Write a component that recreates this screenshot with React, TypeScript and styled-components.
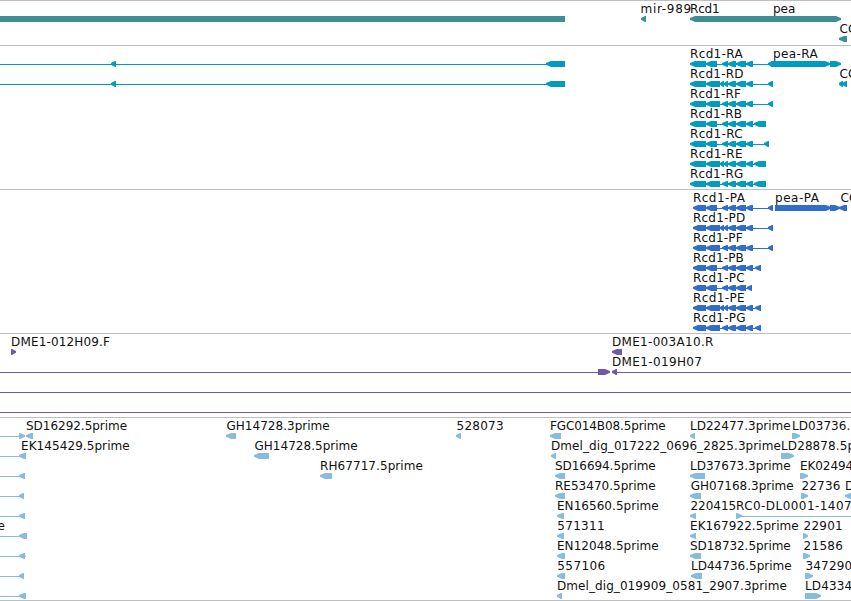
import React from "react";
import styled, { createGlobalStyle } from "styled-components";

const FONT = '12px "DejaVu Sans"';

const GlobalStyle = createGlobalStyle`
  body {
    margin: 0;
    background: #fff;
    overflow: hidden;
  }
`;

const Browser = styled.main`
  display: flex;
  flex-direction: column;
  width: 851px;
  height: 601px;
  box-sizing: border-box;
  overflow: hidden;
  border-bottom: 1px solid #bebebe;
`;

const TrackPanel = styled.section<{ $height: number; $color: string }>`
  display: flex;
  flex-direction: column;
  flex: none;
  box-sizing: border-box;
  height: ${(p) => p.$height}px;
  border-top: 1px solid #bebebe;
  color: ${(p) => p.$color};
`;

const Lane = styled.div`
  position: relative;
  flex: none;
  height: 20px;
`;

const Glyphs = styled.svg`
  display: block;
  width: 851px;
  height: 22px;
  overflow: visible;
  fill: currentColor;
`;

const Name = styled.span`
  position: absolute;
  top: 1px;
  height: 15px;
  font: 12px/15px "DejaVu Sans", sans-serif;
  color: #111;
  white-space: pre;
`;

// Label: text, first inked pixel, last inked pixel.
type Label = [string, number, number];
// Feature: "<" left arrow, ">" right arrow, "=" plain bar, "-" connector.
type Feature = ["<" | ">" | "=" | "-", number, number];
type LaneData = { labels?: Label[]; features: Feature[] };
type Track = { color: string; height: number; lanes: LaneData[] };

const ctx = document.createElement("canvas").getContext("2d")!;

function fitLabel([text, from, to]: Label) {
  ctx.font = FONT;
  const m = ctx.measureText(text);
  const ink = m.actualBoundingBoxRight + m.actualBoundingBoxLeft;
  const gaps = Math.max(1, text.length - 1);
  return {
    left: from + m.actualBoundingBoxLeft,
    letterSpacing: text.length > 1 ? (to - from - ink) / gaps : 0,
  };
}

function Shape({ feature: [kind, a, b] }: { feature: Feature }) {
  if (kind === "-") return <rect x={a} y={18} width={b - a} height={1} />;
  if (kind === "=") return <rect x={a} y={15} width={b - a} height={6} />;
  const head = Math.min(5, b - a - 1);
  const points =
    kind === "<"
      ? `${a},17 ${a + head},15 ${b},15 ${b},21 ${a + head},21 ${a},18.7`
      : `${b},17 ${b - head},15 ${a},15 ${a},21 ${b - head},21 ${b},18.7`;
  return <polygon points={points} />;
}

function TrackView({ track }: { track: Track }) {
  return (
    <TrackPanel $height={track.height} $color={track.color}>
      {track.lanes.map((lane, i) => (
        <Lane key={i}>
          <Glyphs>
            {lane.features.map((f, j) => (
              <Shape key={j} feature={f} />
            ))}
          </Glyphs>
          {lane.labels?.map((l) => (
            <Name key={l[0]} style={fitLabel(l)}>
              {l[0]}
            </Name>
          ))}
        </Lane>
      ))}
    </TrackPanel>
  );
}

// Exons shared by the Rcd1 isoforms.
const rcd1 = (start: number, second: "short" | "long" | "split", tail: Feature[]): Feature[] => [
  ["-", start + 2, tail[tail.length - 1][1] + 3],
  ["<", start, 706],
  ["<", 706, second === "short" ? 717 : 720],
  ...(second === "split"
    ? ([["<", 720, 724], ["<", 724, 728]] as Feature[])
    : ([["<", 722, 728]] as Feature[])),
  ["<", 728, 736],
  ["<", 736, 746],
  ...tail,
];

const mid: Feature = ["<", 746, 753];
const far: Feature = ["<", 768, 773];
const utr: Feature = ["<", 754, 766];
const cds: Feature = ["<", 755, 761];

const tracks: Track[] = [
  {
    color: "#3d8f94",
    height: 45,
    lanes: [
      {
        labels: [["mir-989", 641.5, 690.5], ["Rcd1", 691, 719], ["pea", 774, 795]],
        features: [["=", 0, 565], ["<", 641, 646], ["<", 690, 770], [">", 768, 841]],
      },
      { labels: [["CG", 839.5, 857]], features: [["<", 839, 847]] },
    ],
  },
  {
    color: "#009cbf",
    height: 144,
    lanes: [
      {
        labels: [["Rcd1-RA", 691, 743.5], ["pea-RA", 774, 818.5]],
        features: [
          ["-", 0, 550], ["<", 111, 116], ["<", 546, 565],
          ...rcd1(690, "short", [mid, far]),
          ["=", 771, 775], [">", 772, 830], [">", 830, 841],
        ],
      },
      {
        labels: [["Rcd1-RD", 691, 743.3], ["CG", 839.5, 857]],
        features: [
          ["-", 0, 550], ["<", 111, 116], ["<", 546, 565],
          ...rcd1(690, "split", [mid, far]),
          ["<", 839, 843], ["<", 842, 847],
        ],
      },
      { labels: [["Rcd1-RF", 691, 741]], features: rcd1(690, "long", [mid, far]) },
      { labels: [["Rcd1-RB", 691, 741.7]], features: rcd1(690, "short", [mid, utr]) },
      { labels: [["Rcd1-RC", 691, 742.3]], features: rcd1(690, "short", [mid, ["<", 764, 769]]) },
      { labels: [["Rcd1-RE", 691, 742]], features: rcd1(690, "split", [mid, utr]) },
      { labels: [["Rcd1-RG", 691, 743]], features: rcd1(690, "long", [mid, utr]) },
    ],
  },
  {
    color: "#306dcc",
    height: 144,
    lanes: [
      {
        labels: [["Rcd1-PA", 694, 745.7], ["pea-PA", 776, 819.7], ["CG", 840.5, 858]],
        features: [
          ...rcd1(693, "short", [mid, far]),
          [">", 775, 831], [">", 830, 840], ["<", 839, 847],
        ],
      },
      { labels: [["Rcd1-PD", 694, 745]], features: rcd1(693, "split", [mid, far]) },
      { labels: [["Rcd1-PF", 694, 742.7]], features: rcd1(693, "long", [mid, far]) },
      { labels: [["Rcd1-PB", 694, 743.5]], features: rcd1(693, "short", [mid, cds]) },
      { labels: [["Rcd1-PC", 694, 744.3]], features: rcd1(693, "short", [["<", 747, 752]]) },
      { labels: [["Rcd1-PE", 694, 744]], features: rcd1(693, "split", [mid, cds]) },
      { labels: [["Rcd1-PG", 694, 745.3]], features: rcd1(693, "long", [mid, cds]) },
    ],
  },
  {
    color: "#7158a8",
    height: 84,
    lanes: [
      {
        labels: [["DME1-012H09.F", 12, 110], ["DME1-003A10.R", 613, 713]],
        features: [[">", 11, 16], ["<", 612, 622]],
      },
      {
        labels: [["DME1-019H07", 613, 701.3]],
        features: [["-", 0, 600], [">", 598, 610], ["<", 612, 617], ["-", 615, 851]],
      },
      { features: [["-", 0, 851]] },
      { features: [["-", 0, 851]] },
    ],
  },
  {
    color: "#88bcde",
    height: 183,
    lanes: [
      {
        labels: [
          ["SD16292.5prime", 26, 126.7], ["GH14728.3prime", 226.5, 329.3], ["528073", 456.5, 503],
          ["FGC014B08.5prime", 551, 665.3], ["LD22477.3prime", 691, 790.3], ["LD03736.", 793, 849.5],
        ],
        features: [
          ["-", 0, 20], [">", 19, 25], ["<", 26, 33], ["<", 226, 236], ["<", 456, 461],
          ["<", 550, 561], ["<", 690, 695], [">", 792, 800],
        ],
      },
      {
        labels: [
          ["EK145429.5prime", 22, 129.3], ["GH14728.5prime", 254.5, 357.3],
          ["Dmel_dig_017222_0696_2825.3prime", 552, 780.5], ["LD28878.5p", 782, 854.5],
        ],
        features: [["-", 0, 22], ["<", 19, 26], ["<", 254, 269], ["<", 551, 556], [">", 781, 794]],
      },
      {
        labels: [
          ["RH67717.5prime", 321, 422.5], ["SD16694.5prime", 555, 655.3],
          ["LD37673.3prime", 691, 790.3], ["EK02494", 801, 852.5],
        ],
        features: [["-", 0, 22], ["<", 19, 25], ["<", 320, 332], ["<", 555, 565], ["<", 690, 705], [">", 800, 808]],
      },
      {
        labels: [
          ["RE53470.5prime", 556, 655.3], ["GH07168.3prime", 690.7, 793.3],
          ["22736", 801.5, 839.7], ["D", 846, 853],
        ],
        features: [["-", 0, 22], ["<", 19, 24], ["<", 555, 565], ["<", 690, 701], [">", 801, 808], ["<", 845, 852]],
      },
      {
        labels: [
          ["EN16560.5prime", 558, 658.3], ["220415", 690.5, 735.5], ["RC0-DL0001-1407", 737, 851],
        ],
        features: [["-", 0, 22], ["<", 19, 25], ["<", 557, 564], ["<", 690, 696], [">", 736, 742], ["-", 739, 851]],
      },
      {
        labels: [["e", -2.5, 4], ["571311", 557.3, 604], ["EK167922.5prime", 691, 798.3], ["22901", 803.5, 842]],
        features: [["-", 0, 22], ["<", 19, 27], ["<", 557, 564], ["<", 690, 696], [">", 803, 808]],
      },
      {
        labels: [["EN12048.5prime", 558, 658.3], ["SD18732.5prime", 690, 790.3], ["21586", 803.5, 842.3]],
        features: [["-", 0, 26], ["<", 19, 25], ["<", 557, 565], ["<", 690, 701], [">", 803, 810]],
      },
      {
        labels: [["557106", 557.3, 604.5], ["LD44736.5prime", 692, 791.3], ["347290", 805.5, 851.5]],
        features: [["-", 0, 22], ["<", 19, 24], ["<", 557, 565], ["<", 691, 702], [">", 805, 813]],
      },
      {
        labels: [["Dmel_dig_019909_0581_2907.3prime", 558, 786.5], ["LD4334", 806, 851.5]],
        features: [["-", 0, 22], ["<", 19, 26], ["<", 557, 562], [">", 805, 821]],
      },
    ],
  },
];

export default function App() {
  return (
    <>
      <GlobalStyle />
      <Browser>
        {tracks.map((t) => (
          <TrackView key={t.color} track={t} />
        ))}
      </Browser>
    </>
  );
}
